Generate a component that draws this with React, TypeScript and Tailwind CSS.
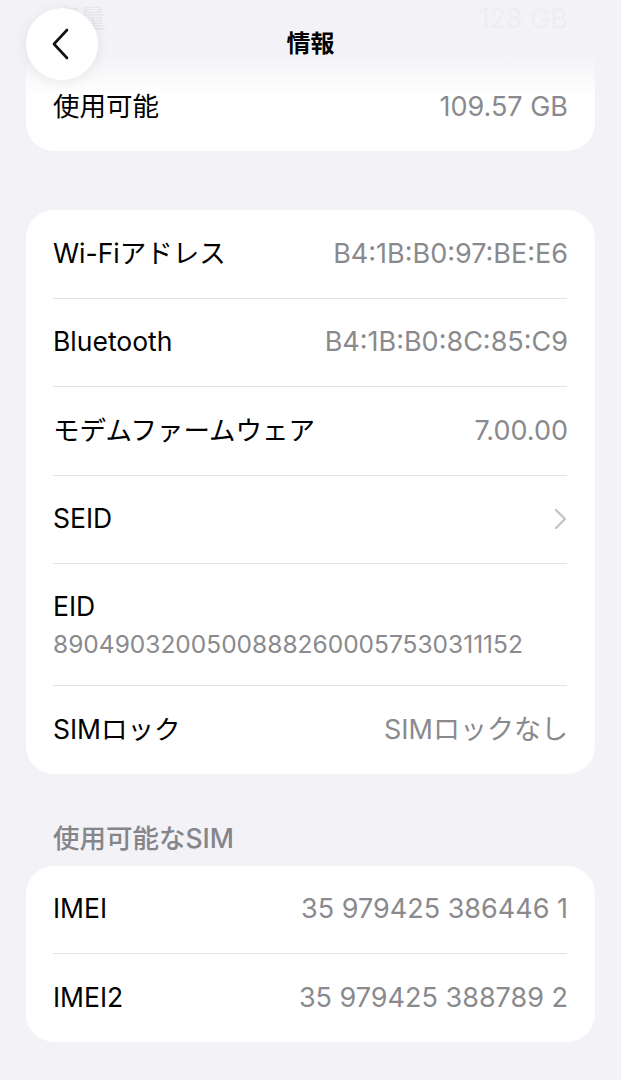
const FONT = { fontFamily: 'Inter, "Noto Sans CJK JP", sans-serif' };

type Row = { label: string; value?: string; chevron?: boolean; stacked?: boolean };

function Divider() {
  return <div className="ml-[27px] mr-[28px] h-px bg-[#e3e3e6]" />;
}

function InfoRow({ label, value, chevron, stacked }: Row) {
  if (stacked) {
    return (
      <div className="flex h-[121px] flex-col justify-center gap-[5px] px-[27px]">
        <span className="text-[26.5px] leading-[34px] text-black">{label}</span>
        <span className="text-[24.5px] leading-[32px] text-[#8a8a8e]">{value}</span>
      </div>
    );
  }
  return (
    <div className="flex h-[87.5px] items-center justify-between px-[27px]">
      <span className="text-[26.5px] text-black">{label}</span>
      {chevron ? (
        <svg width="14" height="22" viewBox="0 0 14 22" className="mr-[1px]">
          <path d="M3 2l9 9-9 9" fill="none" stroke="#c4c4c7" strokeWidth="2.4" strokeLinecap="round" strokeLinejoin="round" />
        </svg>
      ) : (
        <span className="text-[27px] text-[#8a8a8e]">{value}</span>
      )}
    </div>
  );
}

function Card({ rows, className = '', plain = false }: { rows: Row[]; className?: string; plain?: boolean }) {
  return (
    <div className={`mx-[26px] overflow-hidden rounded-[28px] bg-white ${className}`}>
      {rows.map((r, i) => (
        <div key={r.label}>
          {i > 0 && !plain && <Divider />}
          {i > 0 && plain && <div className="h-px" />}
          <InfoRow {...r} />
        </div>
      ))}
    </div>
  );
}

export default function App() {
  return (
    <div className="relative min-h-[1080px] overflow-hidden bg-[#f2f2f7]" style={FONT}>
      <Card
        plain
        className="-mt-[25px]"
        rows={[
          { label: '容量', value: '128 GB' },
          { label: '使用可能', value: '109.57 GB' },
        ]}
      />

      <Card
        className="mt-[59px]"
        rows={[
          { label: 'Wi-Fiアドレス', value: 'B4:1B:B0:97:BE:E6' },
          { label: 'Bluetooth', value: 'B4:1B:B0:8C:85:C9' },
          { label: 'モデムファームウェア', value: '7.00.00' },
          { label: 'SEID', chevron: true },
          { label: 'EID', value: '89049032005008882600057530311152', stacked: true },
          { label: 'SIMロック', value: 'SIMロックなし' },
        ]}
      />

      <div className="mt-[48px] mb-[12px] px-[53px] text-[26.5px] font-medium leading-[32px] text-[#85858a]">
        使用可能なSIM
      </div>
      <Card
        rows={[
          { label: 'IMEI', value: '35 979425 386446 1' },
          { label: 'IMEI2', value: '35 979425 388789 2' },
        ]}
      />

      {/* blurred nav bar over the scrolled content */}
      <div className="absolute inset-x-0 top-0 h-[96px] bg-[linear-gradient(to_bottom,rgba(242,242,247,0.96)_0%,rgba(243,243,247,0.92)_60%,rgba(246,246,249,0)_100%)]">
        <div className="relative flex h-[88px] items-center justify-center">
          <button className="absolute left-[26px] top-[8px] flex h-[72px] w-[72px] items-center justify-center rounded-full bg-white/95 shadow-[0_2px_14px_rgba(0,0,0,0.08)]">
            <svg width="22" height="34" viewBox="0 0 22 34" className="-ml-[3px]">
              <path d="M17 3L4 17l13 14" fill="none" stroke="#111" strokeWidth="2.6" strokeLinecap="round" strokeLinejoin="round" />
            </svg>
          </button>
          <span className="text-[24px] font-bold text-black">情報</span>
        </div>
      </div>
    </div>
  );
}
